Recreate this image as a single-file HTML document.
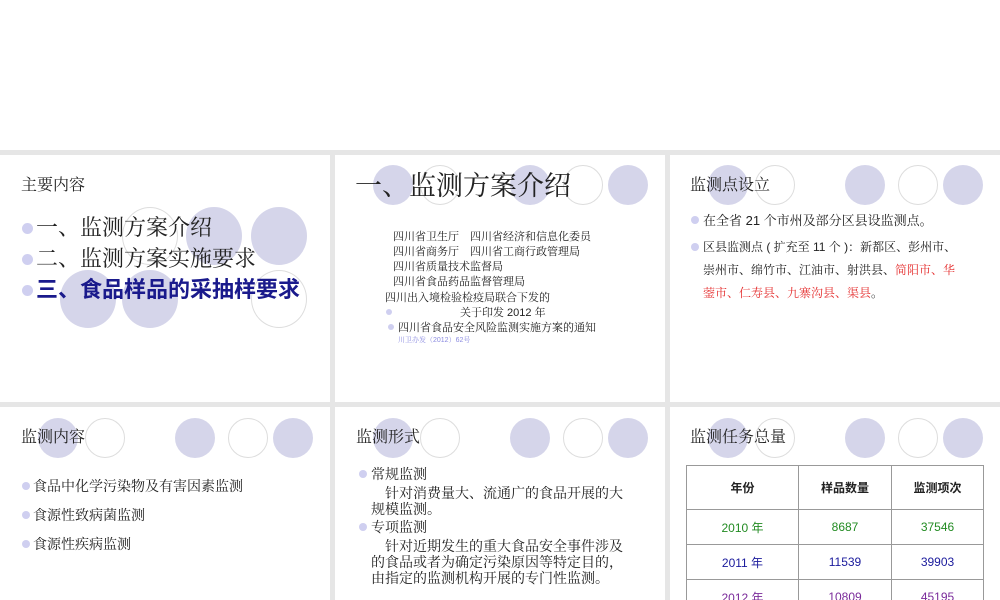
<!DOCTYPE html>
<html style="width:1000px;height:600px;overflow:hidden"><head><meta charset="utf-8"><style>
*{margin:0;padding:0}
html,body{width:1000px;height:600px;overflow:hidden}
body{background:#fff;position:relative;font-family:"Liberation Sans","Noto Serif CJK SC","Noto Sans CJK SC",serif;color:#222}
.bg{position:absolute;left:0;top:150px;width:1000px;height:450px;background:#e6e6e6}
.p{position:absolute;background:#fff;overflow:hidden}
.c{position:absolute;border-radius:50%;box-sizing:border-box}
.f{background:#d5d5ea}
.o{border:1px solid #ddd;background:transparent}
.t{position:absolute;white-space:nowrap;line-height:1}
.b{position:absolute;width:9px;height:9px;border-radius:50%;background:#cfcff0}
table{position:absolute;border-collapse:collapse;font-family:"Liberation Sans","Noto Sans CJK SC",sans-serif;font-size:12px}
td{border:1px solid #999;text-align:center;padding:0}
</style></head><body>
<div class="bg"></div>
<div class="p" style="left:0;top:155px;width:330px;height:247px"></div>
<div class="p" style="left:335px;top:155px;width:330px;height:247px"></div>
<div class="p" style="left:670px;top:155px;width:330px;height:247px"></div>
<div class="p" style="left:0;top:407px;width:330px;height:193px"></div>
<div class="p" style="left:335px;top:407px;width:330px;height:193px"></div>
<div class="p" style="left:670px;top:407px;width:330px;height:193px"></div>

<div class="c o" style="left:122px;top:207px;width:56px;height:58px"></div>
<div class="c f" style="left:186px;top:207px;width:56px;height:58px"></div>
<div class="c f" style="left:251px;top:207px;width:56px;height:58px"></div>
<div class="c f" style="left:60px;top:270px;width:56px;height:58px"></div>
<div class="c f" style="left:122px;top:270px;width:56px;height:58px"></div>
<div class="c o" style="left:251px;top:270px;width:56px;height:58px"></div>

<div class="c f" style="left:373px;top:165px;width:40px;height:40px"></div>
<div class="c o" style="left:420px;top:165px;width:40px;height:40px"></div>
<div class="c f" style="left:510px;top:165px;width:40px;height:40px"></div>
<div class="c o" style="left:563px;top:165px;width:40px;height:40px"></div>
<div class="c f" style="left:608px;top:165px;width:40px;height:40px"></div>

<div class="c f" style="left:708px;top:165px;width:40px;height:40px"></div>
<div class="c o" style="left:755px;top:165px;width:40px;height:40px"></div>
<div class="c f" style="left:845px;top:165px;width:40px;height:40px"></div>
<div class="c o" style="left:898px;top:165px;width:40px;height:40px"></div>
<div class="c f" style="left:943px;top:165px;width:40px;height:40px"></div>

<div class="c f" style="left:38px;top:418px;width:40px;height:40px"></div>
<div class="c o" style="left:85px;top:418px;width:40px;height:40px"></div>
<div class="c f" style="left:175px;top:418px;width:40px;height:40px"></div>
<div class="c o" style="left:228px;top:418px;width:40px;height:40px"></div>
<div class="c f" style="left:273px;top:418px;width:40px;height:40px"></div>

<div class="c f" style="left:373px;top:418px;width:40px;height:40px"></div>
<div class="c o" style="left:420px;top:418px;width:40px;height:40px"></div>
<div class="c f" style="left:510px;top:418px;width:40px;height:40px"></div>
<div class="c o" style="left:563px;top:418px;width:40px;height:40px"></div>
<div class="c f" style="left:608px;top:418px;width:40px;height:40px"></div>

<div class="c f" style="left:708px;top:418px;width:40px;height:40px"></div>
<div class="c o" style="left:755px;top:418px;width:40px;height:40px"></div>
<div class="c f" style="left:845px;top:418px;width:40px;height:40px"></div>
<div class="c o" style="left:898px;top:418px;width:40px;height:40px"></div>
<div class="c f" style="left:943px;top:418px;width:40px;height:40px"></div>

<div class="t" style="left:21px;top:178px;font-size:16px">主要内容</div>
<div class="b" style="left:22px;top:223px;width:11px;height:11px"></div>
<div class="b" style="left:22px;top:254px;width:11px;height:11px"></div>
<div class="b" style="left:22px;top:285px;width:11px;height:11px"></div>
<div class="t" style="left:36px;top:217px;font-size:22px">一、监测方案介绍</div>
<div class="t" style="left:36px;top:248px;font-size:22px">二、监测方案实施要求</div>
<div class="t" style="left:36px;top:279px;font-size:22px;font-weight:bold;color:#1a1a8c;font-family:'Liberation Sans','Noto Sans CJK SC',sans-serif">三、食品样品的采抽样要求</div>

<div class="t" style="left:355px;top:173px;font-size:27px">一、监测方案介绍</div>
<div class="t" style="left:393px;top:232px;font-size:11px">四川省卫生厅　四川省经济和信息化委员</div>
<div class="t" style="left:393px;top:247px;font-size:11px">四川省商务厅　四川省工商行政管理局</div>
<div class="t" style="left:393px;top:262px;font-size:11px">四川省质量技术监督局</div>
<div class="t" style="left:393px;top:277px;font-size:11px">四川省食品药品监督管理局</div>
<div class="t" style="left:385px;top:293px;font-size:11px">四川出入境检验检疫局联合下发的</div>
<div class="b" style="left:386px;top:309px;width:6px;height:6px"></div>
<div class="t" style="left:460px;top:308px;font-size:11px">关于印发 2012 年</div>
<div class="b" style="left:388px;top:324px;width:6px;height:6px"></div>
<div class="t" style="left:398px;top:323px;font-size:11px">四川省食品安全风险监测实施方案的通知</div>
<div class="t" style="left:398px;top:337px;font-size:7px;color:#8b8be0">川卫办发（2012）62号</div>

<div class="t" style="left:690px;top:178px;font-size:16px">监测点设立</div>
<div class="b" style="left:691px;top:216px;width:8px;height:8px"></div>
<div class="t" style="left:703px;top:214px;font-size:13px">在全省 21 个市州及部分区县设监测点。</div>
<div class="b" style="left:691px;top:243px;width:8px;height:8px"></div>
<div class="t" style="left:703px;top:241px;font-size:12px">区县监测点 ( 扩充至 11 个 )：新都区、彭州市、</div>
<div class="t" style="left:703px;top:264px;font-size:12px">崇州市、绵竹市、江油市、射洪县、<span style="color:#e53030">简阳市、华</span></div>
<div class="t" style="left:703px;top:287px;font-size:12px"><span style="color:#e53030">蓥市、仁寿县、九寨沟县、渠县</span>。</div>

<div class="t" style="left:21px;top:430px;font-size:16px">监测内容</div>
<div class="b" style="left:22px;top:482px;width:8px;height:8px"></div>
<div class="b" style="left:22px;top:511px;width:8px;height:8px"></div>
<div class="b" style="left:22px;top:540px;width:8px;height:8px"></div>
<div class="t" style="left:33px;top:479px;font-size:14px">食品中化学污染物及有害因素监测</div>
<div class="t" style="left:33px;top:508px;font-size:14px">食源性致病菌监测</div>
<div class="t" style="left:33px;top:537px;font-size:14px">食源性疾病监测</div>

<div class="t" style="left:356px;top:430px;font-size:16px">监测形式</div>
<div class="b" style="left:359px;top:470px;width:8px;height:8px"></div>
<div class="t" style="left:371px;top:467px;font-size:14px">常规监测</div>
<div class="t" style="left:371px;top:486px;font-size:14px">　针对消费量大、流通广的食品开展的大</div>
<div class="t" style="left:371px;top:502px;font-size:14px">规模监测。</div>
<div class="b" style="left:359px;top:523px;width:8px;height:8px"></div>
<div class="t" style="left:371px;top:520px;font-size:14px">专项监测</div>
<div class="t" style="left:371px;top:539px;font-size:14px">　针对近期发生的重大食品安全事件涉及</div>
<div class="t" style="left:371px;top:555px;font-size:14px">的食品或者为确定污染原因等特定目的，</div>
<div class="t" style="left:371px;top:571px;font-size:14px">由指定的监测机构开展的专门性监测。</div>

<div class="t" style="left:690px;top:430px;font-size:16px">监测任务总量</div>
<table style="left:686px;top:465px;width:298px">
<tr style="height:44px;font-weight:bold"><td style="width:111px">年份</td><td style="width:92px">样品数量</td><td>监测项次</td></tr>
<tr style="height:35px;color:#228b22"><td>2010 年</td><td>8687</td><td>37546</td></tr>
<tr style="height:35px;color:#1a1a9c"><td>2011 年</td><td>11539</td><td>39903</td></tr>
<tr style="height:35px;color:#7a2a9a"><td>2012 年</td><td>10809</td><td>45195</td></tr>
</table>
</body></html>
